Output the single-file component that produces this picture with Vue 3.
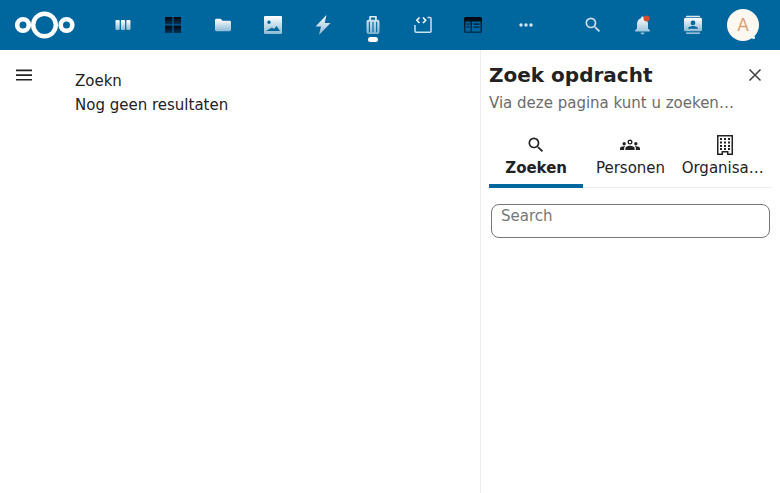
<script setup>
const left = [
  { id: 'apps', active: false },
  { id: 'dash', active: false },
  { id: 'files', active: false },
  { id: 'photos', active: false },
  { id: 'activity', active: false },
  { id: 'bag', active: true },
  { id: 'code', active: false },
  { id: 'table', active: false },
  { id: 'more', active: false }
]
</script>

<template>
  <div class="page">
    <svg width="0" height="0" class="defs">
      <defs>
        <linearGradient id="fade" x1="0" y1="0" x2="0" y2="1">
          <stop offset="0" stop-color="#ffffff" />
          <stop offset="1" stop-color="#ffffff" stop-opacity="0.55" />
        </linearGradient>
        <linearGradient id="bagfill" x1="0" y1="0" x2="0" y2="1">
          <stop offset="0" stop-color="#ffffff" stop-opacity="0.9" />
          <stop offset="1" stop-color="#ffffff" stop-opacity="0.5" />
        </linearGradient>
        <linearGradient id="dark" x1="0" y1="0" x2="0" y2="1">
          <stop offset="0" stop-color="#00060c" />
          <stop offset="1" stop-color="#00345a" />
        </linearGradient>
      </defs>
    </svg>
    <header class="topbar">
      <svg class="logo" width="62" height="28" viewBox="0 0 62 28">
        <circle cx="30.500" cy="14" r="11.300" fill="none" stroke="#fff" stroke-width="4.400" />
        <circle cx="9" cy="14" r="5.800" fill="none" stroke="#fff" stroke-width="4.600" />
        <circle cx="52.500" cy="14" r="5.800" fill="none" stroke="#fff" stroke-width="4.600" />
      </svg>
      <nav class="nav">
        <a v-for="item in left" :key="item.id" class="nav-item" :class="{ more: item.id === 'more' }">
          <svg width="20" height="20" viewBox="0 0 20 20">
            <g v-if="item.id === 'apps'" fill="url(#fade)">
              <rect x="2.500" y="5" width="4.200" height="10" rx="1" />
              <rect x="7.900" y="5" width="4.200" height="10" rx="1" />
              <rect x="13.300" y="5" width="4.200" height="10" rx="1" />
            </g>
            <g v-else-if="item.id === 'dash'" fill="url(#dark)">
              <rect x="2" y="2" width="7.400" height="7.400" />
              <rect x="10.600" y="2" width="7.400" height="7.400" />
              <rect x="2" y="10.600" width="7.400" height="7.400" />
              <rect x="10.600" y="10.600" width="7.400" height="7.400" />
            </g>
            <path v-else-if="item.id === 'files'" fill="url(#fade)" d="M2 5.200a1.400 1.400 0 0 1 1.400-1.400h4.200l2 2h7a1.400 1.400 0 0 1 1.400 1.400v7.600a1.400 1.400 0 0 1-1.400 1.400H3.400a1.400 1.400 0 0 1-1.400-1.400z" />
            <path v-else-if="item.id === 'photos'" fill="url(#fade)" fill-rule="evenodd" d="M2 1h16a1 1 0 0 1 1 1v16a1 1 0 0 1-1 1H2a1 1 0 0 1-1-1V2a1 1 0 0 1 1-1zM6 5.500a1.700 1.700 0 1 0 0 3.400a1.700 1.700 0 0 0 0-3.400zM3 16h14l-3.500-5l-2.500 3l-2-1.500z" />
            <path v-else-if="item.id === 'activity'" fill="url(#fade)" d="M13.500 0L2.500 11.500h5.500L6 20L17.500 8h-5.800z" />
            <g v-else-if="item.id === 'bag'">
              <path fill="url(#bagfill)" fill-rule="evenodd" d="M7 1h6a.8.8 0 0 1 .8.8v3h.7a2 2 0 0 1 2 2v10.200a2 2 0 0 1-2 2h-9a2 2 0 0 1-2-2V6.800a2 2 0 0 1 2-2h.7v-3A.8.8 0 0 1 7 1zM8 2.600v2.200h4V2.600zM5.800 6.800v10.500h1.100V6.800zM9.450 6.800v10.500h1.100V6.800zM13.100 6.800v10.500h1.100V6.800z" />
            </g>
            <g v-else-if="item.id === 'code'" fill="none" stroke-width="1.500">
              <path stroke="#fff" d="M6.500 2.500L3.800 5.300L6.500 8M10 2.500L12.700 5.300L10 8" />
              <path stroke="#cfe1ed" d="M2 10v6.300a1 1 0 0 0 1 1h14a1 1 0 0 0 1-1V3.500a1 1 0 0 0-1-1h-2.500" />
            </g>
            <g v-else-if="item.id === 'table'">
              <path fill="url(#dark)" fill-rule="evenodd" d="M2.500 2h15A1.500 1.500 0 0 1 19 3.500v13a1.500 1.500 0 0 1-1.500 1.500h-15A1.500 1.500 0 0 1 1 16.500v-13A1.500 1.500 0 0 1 2.500 2zM2.500 6.500v10h5v-10zM9 6.500v10h8.500v-10zM3.500 8.500h3v1.300h-3zM3.500 11.500h3v1.300h-3zM10.500 8.500h6v1.300h-6zM10.500 11.500h6v1.300h-6z" />
            </g>
            <g v-else fill="#d6e5ef">
              <circle cx="5" cy="10" r="1.700" />
              <circle cx="10" cy="10" r="1.700" />
              <circle cx="15" cy="10" r="1.700" />
            </g>
          </svg>
          <span v-if="item.active" class="pip"></span>
        </a>
      </nav>
      <div class="right">
        <a class="nav-item">
          <svg width="20" height="20" viewBox="0 0 24 24">
            <path fill="#cfe0ec" d="M9.500 3A6.500 6.500 0 0 1 16 9.500c0 1.610-.59 3.090-1.560 4.230l.27.270h.79l5 5l-1.500 1.500l-5-5v-.79l-.27-.27A6.516 6.516 0 0 1 9.500 16A6.500 6.500 0 0 1 3 9.500A6.500 6.500 0 0 1 9.500 3m0 2C7 5 5 7 5 9.500S7 14 9.500 14S14 12 14 9.500S12 5 9.500 5z" />
          </svg>
        </a>
        <a class="nav-item">
          <svg width="22" height="22" viewBox="0 0 22 22">
            <path fill="url(#fade)" d="M10.500 2.500a1.300 1.300 0 0 1 1.300 1.300v.5c2.600.7 4.200 3 4.200 5.700v4.500l2 2v1H3v-1l2-2V10c0-2.700 1.600-5 4.200-5.700v-.5a1.300 1.300 0 0 1 1.300-1.300zM8.500 18.500h4a2 2 0 0 1-4 0z" />
            <circle cx="14.500" cy="4.500" r="3" fill="#dc4a27" />
          </svg>
        </a>
        <a class="nav-item">
          <svg width="20" height="20" viewBox="0 0 20 20">
            <path fill="url(#fade)" fill-rule="evenodd" d="M2.500 2.800h15a1.500 1.500 0 0 1 1.500 1.500v10.400a1.500 1.500 0 0 1-1.500 1.500h-15A1.500 1.500 0 0 1 1 14.700V4.300a1.500 1.500 0 0 1 1.500-1.500zM10 5.500a2.400 2.400 0 1 0 0 4.800a2.400 2.400 0 0 0 0-4.800zM5 13.800h10c0-1.800-2.800-2.800-5-2.800S5 12 5 13.800z" />
            <rect x="3" y="0.700" width="14" height="1.300" rx=".6" fill="#dbe8f1" />
            <rect x="3" y="17.500" width="14" height="1.300" rx=".6" fill="#c6dae8" />
          </svg>
        </a>
        <div class="avatar">A<span class="status"></span></div>
      </div>
    </header>

    <div class="body">
      <main class="main">
        <button class="menu" aria-label="menu">
          <svg width="18" height="18" viewBox="0 0 18 18">
            <path fill="#222" d="M1 3.500h16v1.700H1zM1 8.200h16v1.700H1zM1 12.900h16v1.700H1z" />
          </svg>
        </button>
        <div class="content">
          <div>Zoekn</div>
          <div>Nog geen resultaten</div>
        </div>
      </main>

      <aside class="side">
        <div class="side-head">
          <h2>Zoek opdracht</h2>
          <svg class="close" width="20" height="20" viewBox="0 0 20 20">
            <path stroke="#444" stroke-width="1.600" d="M4.500 4.500l11 11M15.500 4.500l-11 11" />
          </svg>
        </div>
        <p class="sub">Via deze pagina kunt u zoeken…</p>
        <div class="tabs">
          <div class="tab active">
            <svg width="20" height="20" viewBox="0 0 24 24">
              <path fill="#222" d="M9.500 3A6.500 6.500 0 0 1 16 9.500c0 1.610-.59 3.090-1.560 4.230l.27.270h.79l5 5l-1.500 1.500l-5-5v-.79l-.27-.27A6.516 6.516 0 0 1 9.500 16A6.500 6.500 0 0 1 3 9.500A6.500 6.500 0 0 1 9.500 3m0 2C7 5 5 7 5 9.500S7 14 9.500 14S14 12 14 9.500S12 5 9.500 5z" />
            </svg>
            <span>Zoeken</span>
          </div>
          <div class="tab">
            <svg width="20" height="20" viewBox="0 0 24 24">
              <path fill="#222" d="M12 5.500a3 3 0 1 1 0 6a3 3 0 0 1 0-6zm0 1.600a1.400 1.400 0 1 0 0 2.800a1.400 1.400 0 0 0 0-2.800zM5 8.500a2 2 0 1 1 0 4a2 2 0 0 1 0-4zM19 8.500a2 2 0 1 1 0 4a2 2 0 0 1 0-4zM12 13c3 0 5.500 1.200 5.500 3v2h-11v-2c0-1.800 2.500-3 5.500-3zM4.800 13.500c.5 0 .9 0 1.300.1c-.7.6-1.100 1.400-1.100 2.400v2H0v-1.800c0-1.600 2.200-2.700 4.800-2.700zM19.200 13.500c2.600 0 4.800 1.100 4.800 2.700V18h-5v-2c0-1-.4-1.800-1.100-2.400c.4-.1.800-.1 1.300-.1z" />
            </svg>
            <span>Personen</span>
          </div>
          <div class="tab">
            <svg width="20" height="20" viewBox="0 0 20 20">
              <path fill="#222" fill-rule="evenodd" d="M2 0h16v20h-6v-2.500H8V20H2zM3.500 1.500v17h3V16h7v2.500h3v-17zM5 3h2v2H5zM9 3h2v2H9zM13 3h2v2h-2zM5 6.500h2v2H5zM9 6.500h2v2H9zM13 6.500h2v2h-2zM5 10h2v2H5zM9 10h2v2H9zM13 10h2v2h-2zM5 13h2v2H5zM9 13h2v2H9zM13 13h2v2h-2z" />
            </svg>
            <span class="clip">Organisaties</span>
          </div>
        </div>
        <div class="field">
          <input type="text" placeholder="Search" />
        </div>
      </aside>
    </div>
  </div>
</template>

<style scoped>
.page {
  width: 780px;
  height: 493px;
  overflow: hidden;
  display: flex;
  flex-direction: column;
  background: #fff;
  color: #222;
  font-family: "DejaVu Sans", sans-serif;
  font-size: 15px;
}
.defs { position: absolute; }
.topbar {
  height: 50px;
  flex: none;
  background: #00669e;
  display: flex;
  align-items: center;
}
.logo { margin-left: 14px; flex: none; }
.nav {
  display: flex;
  margin-left: 22px;
}
.nav-item {
  position: relative;
  width: 50px;
  height: 50px;
  display: flex;
  align-items: center;
  justify-content: center;
  flex: none;
}
.nav-item.more { margin-left: 3px; }
.pip {
  position: absolute;
  left: 20px;
  top: 37px;
  width: 10px;
  height: 5px;
  border-radius: 3px;
  background: #fff;
}
.right {
  margin-left: auto;
  display: flex;
  align-items: center;
  padding-right: 21px;
}
.avatar {
  position: relative;
  width: 32px;
  height: 32px;
  margin-left: 9px;
  border-radius: 50%;
  background: #fff8f1;
  color: #d6a176;
  font-size: 17px;
  display: flex;
  align-items: center;
  justify-content: center;
}
.status {
  position: absolute;
  right: 4px;
  bottom: 2px;
  width: 3px;
  height: 3px;
  border-radius: 50%;
  background: #fff;
}
.body {
  flex: 1;
  display: flex;
  min-height: 0;
}
.main {
  width: 480px;
  flex: none;
  display: flex;
}
.menu {
  width: 48px;
  height: 50px;
  padding: 0;
  border: 0;
  background: none;
  display: flex;
  justify-content: center;
  align-items: center;
}
.content {
  margin-left: 27px;
  padding-top: 19px;
  font-size: 15px;
  line-height: 24px;
}
.side {
  flex: 1;
  min-width: 0;
  border-left: 1px solid #ededed;
  padding: 0 8px;
}
.side-head {
  display: flex;
  align-items: center;
  justify-content: space-between;
  padding-top: 13px;
}
h2 {
  margin: 0;
  font-size: 20px;
  line-height: 24px;
  font-weight: 700;
}
.close { margin-right: 7px; }
.sub {
  margin: 5px 0 0;
  font-size: 15px;
  line-height: 22px;
  color: #6b6b6b;
}
.tabs {
  display: flex;
  margin-top: 20px;
  border-bottom: 1px solid #ededed;
}
.tab {
  flex: 1 1 0;
  min-width: 0;
  height: 53px;
  display: flex;
  flex-direction: column;
  align-items: center;
  font-size: 15px;
  line-height: 22px;
  padding: 1px 4px 0;
  box-sizing: border-box;
}
.tab svg { margin-bottom: 2px; flex: none; }
.tab span {
  max-width: 100%;
  white-space: nowrap;
  overflow: hidden;
  text-overflow: ellipsis;
}
.tab.active {
  font-weight: 700;
  border-bottom: 4px solid #00669e;
  height: 54px;
  margin-bottom: -1px;
}
.field { padding: 16px 2px 0; }
input {
  display: block;
  width: 100%;
  height: 34px;
  box-sizing: border-box;
  border: 1px solid #767676;
  border-radius: 8px;
  padding: 0 9px 10px;
  font: inherit;
  outline: none;
}
input::placeholder { color: #767676; opacity: 1; }
</style>
